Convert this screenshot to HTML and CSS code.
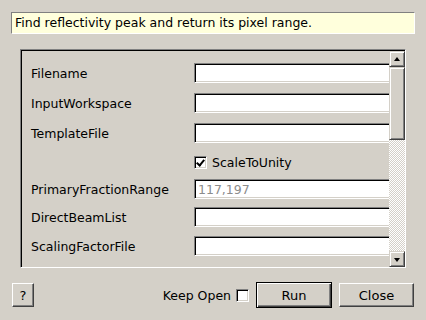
FILE: index.html
```html
<!DOCTYPE html>
<html lang="en">
<head>
    <meta charset="UTF-8">
    <title>Algorithm Dialog</title>
    <link rel="stylesheet" href="styles.css">
</head>
<body>
    <div class="dialog">
        <div class="description">Find reflectivity peak and return its pixel range.</div>

        <div class="panel">
            <div class="viewport">
                <div class="form">
                    <label class="name">Filename</label>
                    <div class="field"><input type="text"></div>

                    <label class="name">InputWorkspace</label>
                    <div class="field"><input type="text"></div>

                    <label class="name">TemplateFile</label>
                    <div class="field"><input type="text"></div>

                    <span class="name"></span>
                    <div class="field">
                        <label class="check"><span class="box checked"></span>ScaleToUnity</label>
                    </div>

                    <label class="name">PrimaryFractionRange</label>
                    <div class="field"><input type="text" class="hint" value="117,197"></div>

                    <label class="name">DirectBeamList</label>
                    <div class="field"><input type="text"></div>

                    <label class="name">ScalingFactorFile</label>
                    <div class="field"><input type="text"></div>
                </div>
            </div>
            <div class="scrollbar">
                <div class="arrow up"></div>
                <div class="thumb"></div>
                <div class="track"></div>
                <div class="arrow down"></div>
            </div>
        </div>

        <div class="actions">
            <button class="btn help">?</button>
            <div class="spacer"></div>
            <label class="keep">Keep Open <span class="box"></span></label>
            <button class="btn run">Run</button>
            <button class="btn close">Close</button>
        </div>
    </div>
</body>
</html>
```

FILE: styles.css
```css
body {
    margin: 0;
    background-color: #d4d0c8;
    font-family: "DejaVu Sans", "Noto Sans", sans-serif;
    font-size: 12.5px;
    color: #000;
}
.dialog {
    width: 426px;
    height: 320px;
    padding: 12px 11px 0 11px;
    box-sizing: border-box;
}

/* tooltip-like description */
.description {
    height: 22px;
    line-height: 20px;
    box-sizing: border-box;
    padding-left: 3px;
    background-color: #ffffdc;
    border: 1px solid;
    border-color: #808080 #ffffff #ffffff #808080;
}

/* sunken scroll panel */
.panel {
    margin: 15px 9px 0 9px;
    height: 219px;
    box-sizing: border-box;
    border: 1px solid;
    border-color: #808080 #ffffff #ffffff #808080;
    display: flex;
}
.viewport {
    flex: 1;
    overflow: hidden;
    border-top: 1px solid #000;
    border-left: 1px solid #000;
}
.form {
    width: 420px;
    padding: 7px 0 0 9px;
    display: grid;
    grid-template-columns: 163px 1fr;
    grid-template-rows: 30px 30px 30px 28px 26px 30px 28px;
    align-items: center;
}
.name {
    line-height: 15px;
}
.field input {
    display: block;
    width: 240px;
    height: 20px;
    box-sizing: border-box;
    margin: 0;
    padding: 0 3px;
    font-family: inherit;
    font-size: 12.5px;
    background: #fff;
    border: 1px solid;
    border-color: #808080 #ffffff #ffffff #808080;
    box-shadow: inset 1px 1px #000, inset -1px -1px #d4d0c8;
    outline: none;
}
.field input.hint {
    color: #8c8c8c;
}
.check {
    display: flex;
    align-items: center;
    gap: 5px;
}
.box {
    display: inline-block;
    width: 13px;
    height: 13px;
    box-sizing: border-box;
    background: #fff;
    border: 1px solid;
    border-color: #808080 #ffffff #ffffff #808080;
    box-shadow: inset 1px 1px #000, inset -1px -1px #d4d0c8;
    position: relative;
}
.box.checked::after {
    content: "";
    position: absolute;
    left: 3px;
    top: 1px;
    width: 3px;
    height: 6px;
    border: solid #000;
    border-width: 0 2px 2px 0;
    transform: rotate(40deg);
}

/* scrollbar */
.scrollbar {
    width: 16px;
    display: flex;
    flex-direction: column;
    border-top: 1px solid #000;
    box-sizing: border-box;
}
.arrow,
.thumb {
    box-sizing: border-box;
    background: #d4d0c8;
    border: 1px solid;
    border-color: #d4d0c8 #404040 #404040 #d4d0c8;
    box-shadow: inset 1px 1px #fff, inset -1px -1px #808080;
    position: relative;
}
.arrow {
    height: 16px;
}
.arrow::after {
    content: "";
    position: absolute;
    left: 4px;
    width: 0;
    height: 0;
    border-left: 3.5px solid transparent;
    border-right: 3.5px solid transparent;
}
.arrow.up::after {
    top: 5px;
    border-bottom: 4px solid #000;
}
.arrow.down::after {
    top: 6px;
    border-top: 4px solid #000;
}
.thumb {
    height: 73px;
}
.track {
    flex: 1;
    background: repeating-conic-gradient(#ffffff 0 25%, #d4d0c8 0 50%) 0 0 / 2px 2px;
}

/* bottom buttons */
.actions {
    display: flex;
    align-items: center;
    margin-top: 14px;
    padding-left: 1px;
}
.spacer {
    flex: 1;
}
.btn {
    height: 24px;
    box-sizing: border-box;
    padding: 0;
    font-family: inherit;
    font-size: 13px;
    color: #000;
    background: #d4d0c8;
    border: 1px solid;
    border-color: #ffffff #404040 #404040 #ffffff;
    box-shadow: inset -1px -1px #808080;
}
.help {
    width: 22px;
}
.keep {
    display: flex;
    align-items: center;
    gap: 5px;
    margin-right: 7px;
}
.run {
    width: 76px;
    height: 26px;
    border: 1px solid #000;
    box-shadow: inset 1px 1px #fff, inset -1px -1px #404040, inset -2px -2px #808080;
}
.close {
    width: 75px;
    margin-left: 7px;
    margin-right: 1px;
}
```
